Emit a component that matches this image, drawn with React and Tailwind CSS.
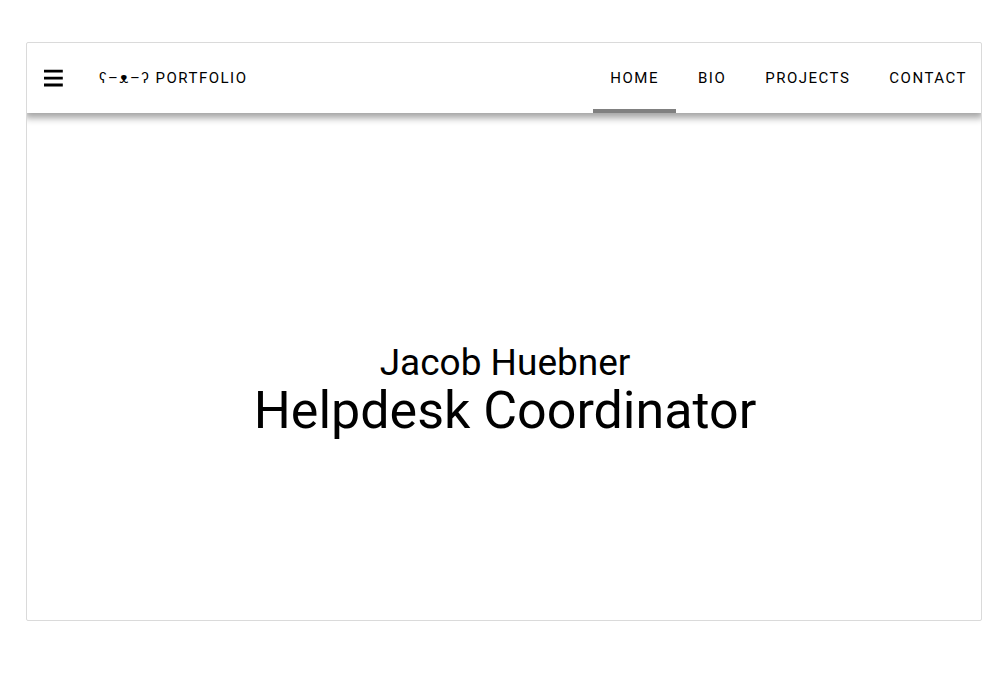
const links = ["Home", "Bio", "Projects", "Contact"];

export default function App() {
  return (
    <div className="flex min-h-screen flex-col bg-white pt-[42px] pr-[21px] pb-[53px] pl-[26px] font-['Roboto',sans-serif] text-black">
      <div className="flex grow flex-col overflow-hidden rounded-xs border border-[#dadada]">
        <header className="flex h-[70px] shrink-0 items-stretch justify-between shadow-[0_3px_7px_2px_rgba(0,0,0,0.36)]">
          <div className="flex items-center gap-[34px] pl-3.5">
            <button type="button" aria-label="Open menu">
              <svg className="size-6" viewBox="0 0 24 24" fill="none" stroke="currentColor" strokeWidth="2.8">
                <path d="M3 5.2H21.8M3 12.1H21.8M3 19H21.8" />
              </svg>
            </button>
            <a href="#home" className="text-[15px] tracking-widest">ʕ–ᴥ–ʔ PORTFOLIO</a>
          </div>
          <nav className="-mr-[3px] flex gap-[5px]">
            {links.map((link, i) => (
              <a
                key={link}
                href={`#${link.toLowerCase()}`}
                aria-current={i === 0 ? "page" : undefined}
                className="flex items-center border-b-4 border-transparent px-[17px] pt-1 text-[15px] tracking-widest uppercase aria-[current=page]:border-[#808080]"
              >
                {link}
              </a>
            ))}
          </nav>
        </header>
        <main className="flex grow flex-col items-center justify-center pt-12 pl-0.5 text-center">
          <h2 className="text-[37px] leading-10">Jacob Huebner</h2>
          <h1 className="text-[52px] leading-14">Helpdesk Coordinator</h1>
        </main>
      </div>
    </div>
  );
}
